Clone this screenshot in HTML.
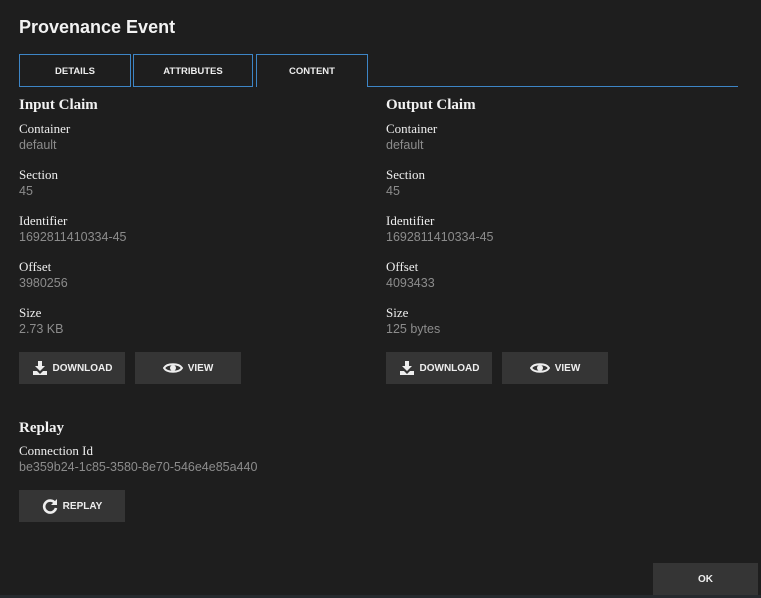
<!DOCTYPE html>
<html><head><style>
body{margin:0;width:761px;height:598px;background:#1e1e1e;position:relative;overflow:hidden;font-family:"Liberation Sans",sans-serif;color:#eee}
.a{position:absolute}
h1{position:absolute;left:19px;top:17px;margin:0;font-size:18px;font-weight:bold;color:#f2f2f2}
.tab{position:absolute;top:54px;height:31px;border:1px solid #3d85c6;box-sizing:content-box;font-size:9.5px;font-weight:bold;text-align:center;line-height:33px;color:#eee}
.h{font-family:"Liberation Serif",serif;font-weight:bold;font-size:15px;line-height:17px;color:#f2f2f2}
.l{font-family:"Liberation Serif",serif;font-size:13px;line-height:15px;color:#eee}
.v{font-size:12.5px;line-height:15px;color:#8c8c8c}
.btn{position:absolute;background:#353535;height:32px;font-size:10px;font-weight:bold;display:flex;align-items:center;justify-content:center;gap:5px;color:#eee}
</style></head><body>
<h1>Provenance Event</h1>
<div class="tab" style="left:19px;width:110px">DETAILS</div>
<div class="tab" style="left:133px;width:118px">ATTRIBUTES</div>
<div class="tab" style="left:256px;width:110px;border-bottom:none;height:32px;background:#1e1e1e;z-index:2">CONTENT</div>
<div class="a" style="left:367px;top:86px;width:371px;height:1px;background:#3d85c6"></div>

<div class="a" style="left:19px;top:97px">
<div class="h">Input Claim</div>
<div class="l" style="margin-top:7px">Container</div><div class="v" style="margin-top:2px">default</div>
<div class="l" style="margin-top:14px">Section</div><div class="v" style="margin-top:2px">45</div>
<div class="l" style="margin-top:14px">Identifier</div><div class="v" style="margin-top:2px">1692811410334-45</div>
<div class="l" style="margin-top:14px">Offset</div><div class="v" style="margin-top:2px">3980256</div>
<div class="l" style="margin-top:14px">Size</div><div class="v" style="margin-top:2px">2.73 KB</div>
</div>
<div class="a" style="left:386px;top:97px">
<div class="h">Output Claim</div>
<div class="l" style="margin-top:7px">Container</div><div class="v" style="margin-top:2px">default</div>
<div class="l" style="margin-top:14px">Section</div><div class="v" style="margin-top:2px">45</div>
<div class="l" style="margin-top:14px">Identifier</div><div class="v" style="margin-top:2px">1692811410334-45</div>
<div class="l" style="margin-top:14px">Offset</div><div class="v" style="margin-top:2px">4093433</div>
<div class="l" style="margin-top:14px">Size</div><div class="v" style="margin-top:2px">125 bytes</div>
</div>

<svg width="0" height="0" style="position:absolute"><defs>
<symbol id="dl" viewBox="0 0 16 16"><path d="M6 1h4v5h3l-5 5-5-5h3z" fill="#eee"/><path d="M1 11h4l3 3 3-3h4v4H1z" fill="#eee"/></symbol>
<symbol id="eye" viewBox="0 0 20 14"><path d="M1 7C4 2 16 2 19 7 16 12 4 12 1 7z" fill="none" stroke="#eee" stroke-width="2"/><circle cx="10" cy="7" r="3" fill="#eee"/></symbol>
</defs></svg>

<div class="btn" style="left:19px;top:352px;width:106px"><svg width="16" height="16"><use href="#dl"/></svg>DOWNLOAD</div>
<div class="btn" style="left:135px;top:352px;width:106px"><svg width="20" height="14"><use href="#eye"/></svg>VIEW</div>
<div class="btn" style="left:386px;top:352px;width:106px"><svg width="16" height="16"><use href="#dl"/></svg>DOWNLOAD</div>
<div class="btn" style="left:502px;top:352px;width:106px"><svg width="20" height="14"><use href="#eye"/></svg>VIEW</div>

<div class="a" style="left:19px;top:420px">
<div class="h">Replay</div>
<div class="l" style="margin-top:6px">Connection Id</div><div class="v" style="margin-top:2px">be359b24-1c85-3580-8e70-546e4e85a440</div>
</div>
<div class="btn" style="left:19px;top:490px;width:106px"><svg width="16" height="16" viewBox="0 0 16 16"><path d="M13 5A6 6 0 1 0 14 10" fill="none" stroke="#eee" stroke-width="2.6"/><path d="M15 1v6H9z" fill="#eee"/></svg>REPLAY</div>

<div class="btn" style="left:653px;top:563px;width:105px">OK</div>
<div class="a" style="left:0;top:595px;width:761px;height:3px;background:#262a2e"></div>
</body></html>
